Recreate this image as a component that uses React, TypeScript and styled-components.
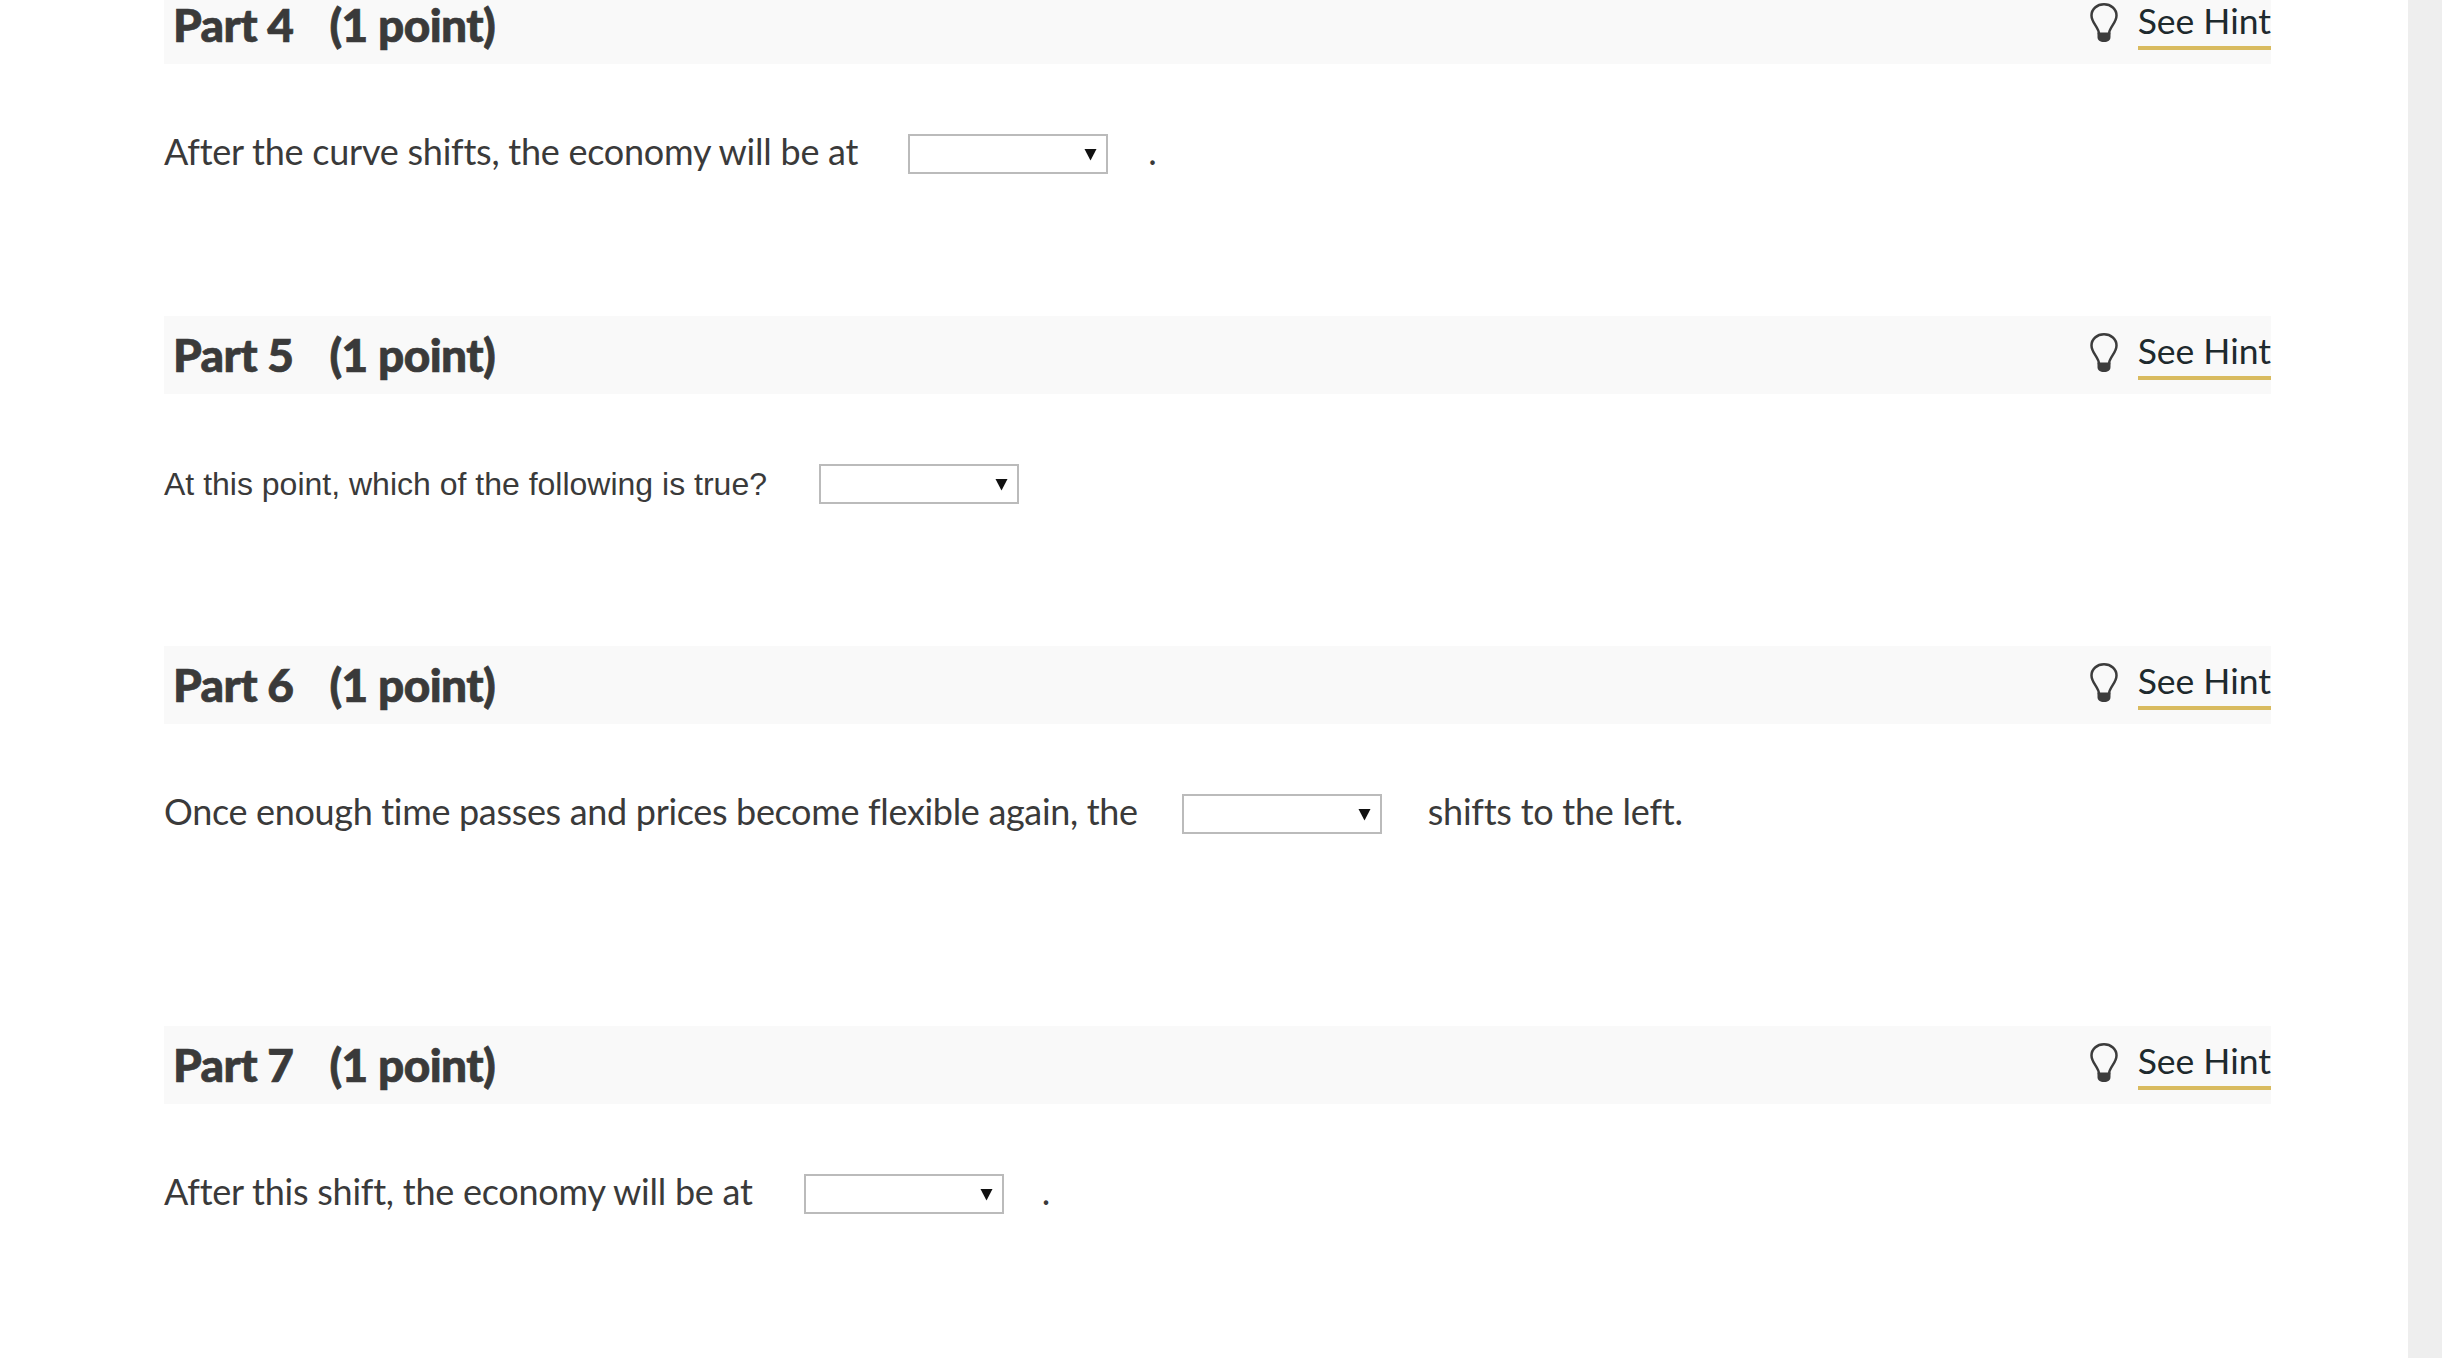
import React from "react";
import styled, { createGlobalStyle } from "styled-components";

const Global = createGlobalStyle`
  html, body { margin: 0; padding: 0; height: 100%; overflow: hidden; background: #fff; }
  #root { height: 100%; }
`;

const Shell = styled.div`
  display: flex;
  height: 1358px;
  overflow: hidden;
  font-family: Lato, "Open Sans", sans-serif;
  color: #3a3a3a;
`;

const Main = styled.main`
  flex: 1;
  padding: 0 137px 0 164px;
  overflow: hidden;
`;

const Track = styled.div`
  width: 34px;
  background: #eeeeee;
`;

const Stack = styled.div`
  margin-top: -14px;
`;

const Section = styled.section<{ $height: number }>`
  height: ${(p) => p.$height}px;
`;

const Bar = styled.header`
  height: 78px;
  box-sizing: border-box;
  background: #f9f9f9;
  padding: 14px 0 14px 9px;
  display: flex;
  justify-content: space-between;
`;

const Title = styled.h2`
  margin: 0;
  font-size: 46px;
  font-weight: 900;
  line-height: 50px;
  letter-spacing: -0.6px;
  -webkit-text-stroke: 0.7px #3a3a3a;
  color: #3a3a3a;
  display: flex;
  gap: 36px;
`;

const HintGroup = styled.div`
  display: flex;
  align-items: flex-start;
  gap: 20px;
`;

const HintLink = styled.a`
  display: block;
  font-size: 35.5px;
  line-height: 41px;
  padding-bottom: 5px;
  color: #1e2a2e;
  border-bottom: 4px solid #d9bb5f;
`;

const Bulb = styled.svg`
  width: 28px;
  height: 39px;
  margin-top: 3px;
  flex: none;
`;

const Row = styled.div`
  display: flex;
  align-items: center;
  height: 40px;
  margin-top: 70px;
`;

const Prompt = styled.span<{ $plain?: boolean; $tight?: boolean }>`
  font-family: ${(p) => (p.$plain ? '"Liberation Sans", Arial, sans-serif' : "inherit")};
  font-size: ${(p) => (p.$plain ? "32px" : "36px")};
  letter-spacing: ${(p) => (p.$plain ? "0" : p.$tight ? "-0.33px" : "-0.25px")};
  margin-bottom: ${(p) => (p.$plain ? "0" : "6px")};
  white-space: nowrap;
`;

const Dropdown = styled.div<{ $before: number; $after: number }>`
  width: 200px;
  height: 40px;
  box-sizing: border-box;
  margin: 0 ${(p) => p.$after}px 0 ${(p) => p.$before}px;
  border: 2px solid #bbbbbb;
  background: #fff;
  display: flex;
  align-items: center;
  justify-content: flex-end;
  padding-right: 9px;
  flex: none;
`;

const Arrow = styled.svg`
  width: 13px;
  height: 13px;
  margin-top: 1px;
`;

const BulbIcon = () => (
  <Bulb viewBox="0 0 28 39" aria-hidden="true">
    <path
      d="M9 31 C9 24.5 1.5 20 1.5 12.5 C1.5 6 7 1.3 14 1.3 C21 1.3 26.5 6 26.5 12.5 C26.5 20 19 24.5 19 31"
      fill="none"
      stroke="#3c3c3c"
      strokeWidth="2.5"
      strokeLinecap="round"
    />
    <path d="M7.5 29.5 H20.5 V34 C20.5 37.5 18 39 14 39 C10 39 7.5 37.5 7.5 34 Z" fill="#3c3c3c" />
  </Bulb>
);

const Select = ({ before, after = 0 }: { before: number; after?: number }) => (
  <Dropdown $before={before} $after={after} role="combobox">
    <Arrow viewBox="0 0 13 13" aria-hidden="true">
      <path d="M0.5 1 H12.5 L6.5 12.5 Z" fill="#111" />
    </Arrow>
  </Dropdown>
);

const Head = ({ n }: { n: number }) => (
  <Bar>
    <Title>
      <span>Part {n}</span>
      <span>(1 point)</span>
    </Title>
    <HintGroup>
      <BulbIcon />
      <HintLink>See Hint</HintLink>
    </HintGroup>
  </Bar>
);

export default function App() {
  return (
    <>
      <Global />
      <Shell>
        <Main>
          <Stack>
            <Section $height={330}>
              <Head n={4} />
              <Row>
                <Prompt>After the curve shifts, the economy will be at</Prompt>
                <Select before={50} after={40} />
                <Prompt>.</Prompt>
              </Row>
            </Section>
            <Section $height={330}>
              <Head n={5} />
              <Row>
                <Prompt $plain>At this point, which of the following is true?</Prompt>
                <Select before={52} />
              </Row>
            </Section>
            <Section $height={380}>
              <Head n={6} />
              <Row>
                <Prompt $tight>Once enough time passes and prices become flexible again, the</Prompt>
                <Select before={44} after={46} />
                <Prompt>shifts to the left.</Prompt>
              </Row>
            </Section>
            <Section $height={330}>
              <Head n={7} />
              <Row>
                <Prompt>After this shift, the economy will be at</Prompt>
                <Select before={51} after={38} />
                <Prompt>.</Prompt>
              </Row>
            </Section>
          </Stack>
        </Main>
        <Track />
      </Shell>
    </>
  );
}
